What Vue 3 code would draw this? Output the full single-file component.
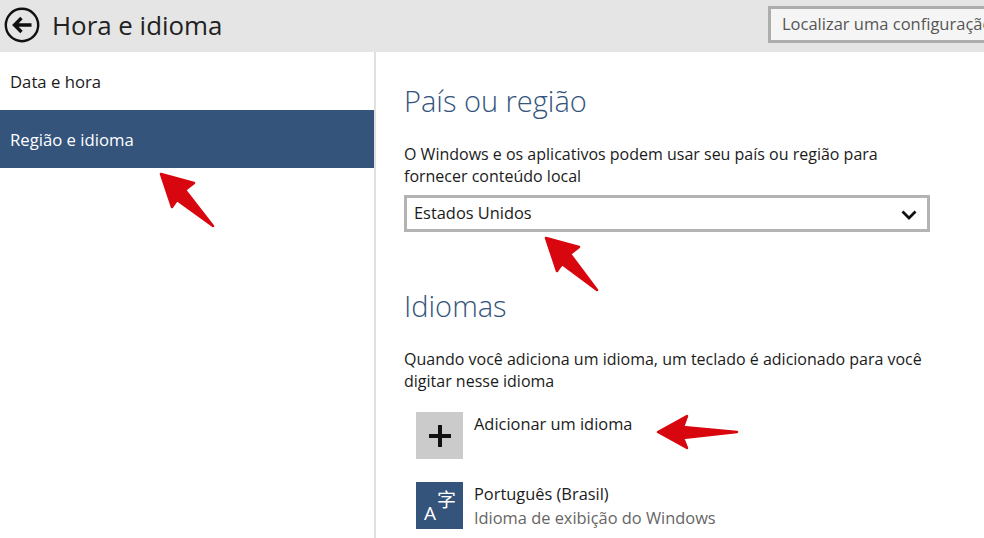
<template>
  <div class="page">
    <!-- cabeçalho -->
    <header class="top-bar">
      <button class="back-button">
        <svg width="36" height="36" viewBox="0 0 36 36">
          <circle cx="18" cy="18" r="16.2" fill="none" stroke="#111" stroke-width="2.4" />
          <path d="M27.500 18H11M17.500 11l-7 7 7 7" fill="none" stroke="#111" stroke-width="3.400" />
        </svg>
      </button>
      <h1>Hora e idioma</h1>
      <div class="search-box">Localizar uma configuração</div>
    </header>

    <div class="main">
      <!-- menu lateral -->
      <nav class="side-menu">
        <a
          v-for="item in menuItems"
          :key="item"
          class="menu-item"
          :class="{ selected: item === selectedItem }"
        >{{ item }}</a>
      </nav>

      <section class="content">
        <h2>País ou região</h2>
        <p class="description">O Windows e os aplicativos podem usar seu país ou região para<br />fornecer conteúdo local</p>
        <div class="select-box">
          <span>Estados Unidos</span>
          <svg width="16" height="10" viewBox="0 0 16 10">
            <path d="M1.500 1.500 8 8l6.500-6.500" fill="none" stroke="#111" stroke-width="2.800" />
          </svg>
        </div>

        <h2 class="languages-title">Idiomas</h2>
        <p class="description">Quando você adiciona um idioma, um teclado é adicionado para você<br />digitar nesse idioma</p>

        <div class="language-row add-row">
          <div class="tile add-tile">
            <svg width="24" height="24" viewBox="0 0 24 24">
              <path d="M12 1v22M1 12h22" stroke="#111" stroke-width="4" />
            </svg>
          </div>
          <div class="language-name">Adicionar um idioma</div>
        </div>

        <div class="language-row">
          <div class="tile language-tile">
            <span class="tile-latin">A</span>
            <span class="tile-cjk">字</span>
          </div>
          <div>
            <div class="language-name">Português (Brasil)</div>
            <div class="language-note">Idioma de exibição do Windows</div>
          </div>
        </div>
      </section>
    </div>

    <!-- setas vermelhas por cima da captura -->
    <svg class="arrows" width="984" height="538" viewBox="0 0 984 538">
      <path
        v-for="(arrow, index) in arrows"
        :key="index"
        :d="arrow"
        fill="#d8060f"
        stroke="#d8060f"
        stroke-width="2.500"
        stroke-linejoin="round"
      />
    </svg>
  </div>
</template>

<script setup>
const menuItems = ['Data e hora', 'Região e idioma']
const selectedItem = 'Região e idioma'

const arrows = [
  'M161 174 194 183 185 190 213 226 177 200 172 207Z',
  'M546 238 579 247 570 254 597 290 562 264 557 271Z',
  'M658 432 687 416 683 427 737 432 683 438 687 448Z'
]
</script>

<style scoped>
.page {
  position: relative;
  width: 984px;
  height: 538px;
  overflow: hidden;
  background: #fff;
  color: #1b1b1b;
  font-family: "Open Sans", "Noto Sans", sans-serif;
  font-size: 16.4px;
}

.top-bar {
  display: flex;
  align-items: center;
  box-sizing: border-box;
  height: 52px;
  padding: 0 0 3px 4px;
  background: #e5e5e5;
}

.back-button {
  display: flex;
  width: 36px;
  height: 36px;
  margin: 0;
  padding: 0;
  border: none;
  background: none;
}

.top-bar h1 {
  margin: 0 0 0 12px;
  font-size: 25.9px;
  font-weight: 400;
  color: #222;
}

.search-box {
  flex: none;
  box-sizing: border-box;
  width: 260px;
  height: 37px;
  margin-left: auto;
  margin-right: -44px;
  margin-bottom: 1px;
  padding-left: 11px;
  border: 3px solid #adadad;
  background: #f5f5f5;
  color: #555;
  font-size: 16.500px;
  line-height: 30px;
  white-space: nowrap;
}

.main {
  display: flex;
  height: 486px;
}

.side-menu {
  flex: none;
  width: 374px;
  border-right: 2px solid #e0e0e0;
  font-size: 16.700px;
}

.menu-item {
  display: block;
  height: 58px;
  padding-left: 10px;
  line-height: 60px;
}

.menu-item.selected {
  background: #34547c;
  color: #fff;
}

.content {
  flex: 1;
  padding: 28px 0 0 28px;
}

.content h2 {
  margin: 0;
  font-size: 29px;
  font-weight: 300;
  line-height: 42px;
  color: #34547c;
}

.description {
  margin: 21px 0 0;
  font-size: 16px;
  line-height: 22px;
}

.select-box {
  display: flex;
  align-items: center;
  justify-content: space-between;
  box-sizing: border-box;
  width: 526px;
  height: 37px;
  margin-top: 8px;
  padding: 0 10px 2px 7px;
  border: 3px solid #b3b3b3;
}

.select-box svg {
  margin-top: 4px;
}

.languages-title {
  margin-top: 53px !important;
}

.language-row {
  display: flex;
  gap: 11px;
  margin: 0 0 23px 12px;
}

.add-row {
  margin-top: 20px;
}

.tile {
  position: relative;
  display: flex;
  align-items: center;
  justify-content: center;
  flex: none;
  width: 47px;
  height: 47px;
}

.add-tile {
  background: #cbcbcb;
}

.language-tile {
  background: #34547c;
  color: #fff;
}

.tile-latin {
  position: absolute;
  left: 8px;
  bottom: 3px;
  font-size: 19px;
}

.tile-cjk {
  position: absolute;
  right: 7px;
  top: 3px;
  font-family: "Noto Sans CJK SC", sans-serif;
  font-size: 19px;
}

.language-name {
  line-height: 24px;
}

.language-note {
  color: #666;
  line-height: 24px;
}

.arrows {
  position: absolute;
  top: 0;
  left: 0;
  pointer-events: none;
}
</style>
